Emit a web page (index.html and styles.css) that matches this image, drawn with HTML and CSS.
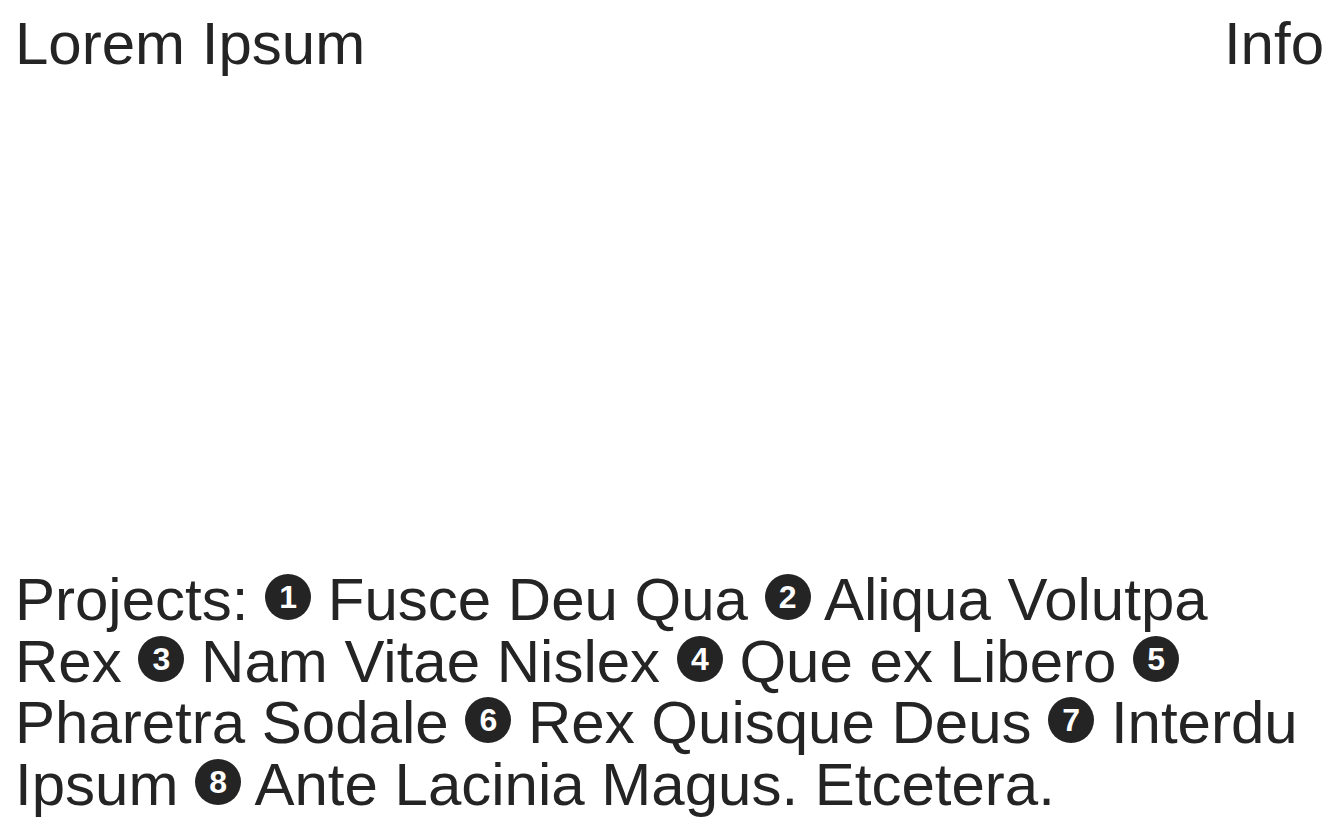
FILE: index.html
```html
<!DOCTYPE html>
<html lang="en">
<head>
<meta charset="utf-8">
<title>Lorem Ipsum</title>
<link rel="stylesheet" href="styles.css">
</head>
<body>
<div class="page">
  <header class="top">
    <a class="brand" href="#">Lorem Ipsum</a>
    <a class="nav" href="#">Info</a>
  </header>
  <main class="projects">
    <p class="list">Projects: <span class="num">1</span> Fusce Deu Qua <span class="num">2</span> Aliqua Volutpa Rex <span class="num">3</span> Nam Vitae Nislex <span class="num">4</span> Que ex Libero <span class="num">5</span> Pharetra Sodale <span class="num">6</span> Rex Quisque Deus <span class="num">7</span> Interdu Ipsum <span class="num">8</span> Ante Lacinia Magus. Etcetera.</p>
  </main>
</div>
</body>
</html>
```

FILE: styles.css
```css
html, body {
  margin: 0;
  padding: 0;
  background: #fff;
}
body {
  font-family: "Liberation Sans", Arial, sans-serif;
  color: #242424;
}
.page {
  height: 100vh;
  box-sizing: border-box;
  display: flex;
  flex-direction: column;
  justify-content: space-between;
  padding: 13px 9px 19px 15px;
}
.top {
  display: flex;
  justify-content: space-between;
  align-items: baseline;
  font-size: 60px;
  line-height: 1.03;
}
.top a {
  color: inherit;
  text-decoration: none;
}
.list {
  margin: 0;
  font-size: 60px;
  line-height: 1.03;
}
.num {
  display: inline-block;
  width: 46px;
  height: 46px;
  border-radius: 50%;
  background: #242424;
  color: #fff;
  font-size: 32px;
  font-weight: 700;
  line-height: 46px;
  text-align: center;
  vertical-align: 12px;
}
```
